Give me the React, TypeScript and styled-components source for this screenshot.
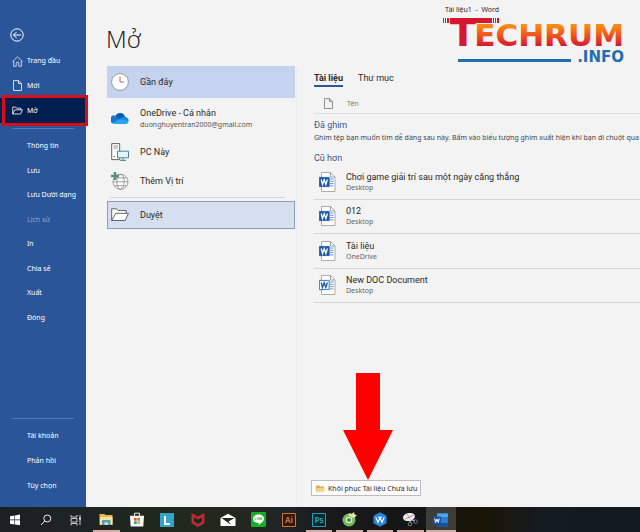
import React from "react";
import styled, { createGlobalStyle, css } from "styled-components";

const GlobalStyle = createGlobalStyle`
  *, *::before, *::after { box-sizing: border-box; }
  body {
    margin: 0;
    background: #f3f3f3;
    color: #2a2a2a;
    font-family: "Noto Sans", "Open Sans", sans-serif;
    overflow-x: hidden;
  }
  button { font: inherit; color: inherit; background: none; border: 0; padding: 0; margin: 0; text-align: left; }
  h1, h2, p { margin: 0; font-weight: 400; }
  ul { list-style: none; margin: 0; padding: 0; }
  svg { display: block; flex: none; }
`;

const labelFont = css`
  font-family: Roboto, "Noto Sans", sans-serif;
  font-size: 9px;
`;

const Page = styled.div`
  display: flex;
  flex-direction: column;
  min-height: 100vh;
`;

const Backstage = styled.div`
  flex: 1;
  display: flex;
  min-width: 0;
`;

const Sidebar = styled.nav`
  flex: none;
  width: 86px;
  display: flex;
  flex-direction: column;
  background: #2a5699;
  color: #fff;
  padding-bottom: 9px;
`;

const BackButton = styled.button`
  width: 14px;
  height: 14px;
  margin: 28px 0 7px 10px;
`;

const NavList = styled.ul<{ $rows: number; $height: number }>`
  display: grid;
  grid-template-rows: repeat(${(p) => p.$rows}, 1fr);
  min-height: ${(p) => p.$height}px;
`;

const NavItem = styled.li`
  display: grid;
`;

const NavButton = styled.button<{ $active?: boolean; $dim?: boolean }>`
  position: relative;
  display: grid;
  grid-template-columns: 11px 1fr;
  column-gap: 4px;
  align-items: center;
  padding-left: 12px;
  font-size: 7px;
  line-height: 10px;
  white-space: nowrap;
  color: ${(p) => (p.$dim ? "#8ba5cc" : "#fff")};
  background: ${(p) => (p.$active ? "#001e50" : "none")};
  ${(p) =>
    p.$active &&
    css`
      &::after {
        content: "";
        position: absolute;
        inset: -3px -2px -3px 2px;
        border: 3px solid #d90d16;
        z-index: 1;
      }
    `}
  span { grid-column: 2; }
`;

const NavRule = styled.hr<{ $push?: boolean }>`
  width: 62px;
  height: 1px;
  border: 0;
  background: #4f7bbd;
  margin: ${(p) => (p.$push ? "auto" : "5px")} 0 5px 12px;
`;

const Content = styled.main`
  flex: 1;
  min-width: 0;
  display: flex;
  flex-direction: column;
  position: relative;
`;

const WindowTitle = styled.div`
  position: absolute;
  top: 4px;
  left: 359px;
  font-size: 7px;
  line-height: 12px;
  white-space: pre;
`;

const Brand = styled.svg`
  position: absolute;
  top: 16px;
  right: 12px;
`;

const Heading = styled.h1`
  margin: 22px 0 10px 20px;
  font-family: "Open Sans", "Noto Sans", sans-serif;
  font-size: 24px;
  line-height: 34px;
  font-weight: 300;
  color: #111;
`;

const Columns = styled.div`
  flex: 1;
  display: flex;
  min-width: 0;
`;

const Places = styled.section`
  flex: none;
  width: 211px;
  padding: 0 1px 0 21px;
  border-right: 1px solid #ececec;
`;

const Place = styled.button<{ $height: number; $tone?: "selected" | "framed" }>`
  display: flex;
  align-items: center;
  gap: 11px;
  width: 100%;
  min-height: ${(p) => p.$height}px;
  padding-left: 4px;
  ${labelFont}
  line-height: 12px;
  ${(p) => p.$tone === "selected" && "background: #c5d3ee;"}
  ${(p) => p.$tone === "framed" && "background: #d5dff0; box-shadow: inset 0 0 0 1px #8b9db9;"}
  small { display: block; font-family: "Noto Sans", sans-serif; font-size: 7px; line-height: 11px; color: #555; }
`;

const PlaceRule = styled.hr`
  height: 1px;
  border: 0;
  background: #d3d3d3;
  margin: 1px 10px 3px 3px;
`;

const Documents = styled.section`
  flex: 1;
  min-width: 0;
  display: flex;
  flex-direction: column;
  padding-left: 17px;
  overflow: hidden;
`;

const Tabs = styled.div`
  display: flex;
  gap: 15px;
  margin-top: 4px;
`;

const Tab = styled.button<{ $active?: boolean }>`
  height: 17px;
  ${labelFont}
  line-height: 14px;
  font-weight: ${(p) => (p.$active ? 700 : 400)};
  border-bottom: 2px solid ${(p) => (p.$active ? "#2b5797" : "transparent")};
`;

const ListHeader = styled.div`
  display: flex;
  align-items: center;
  gap: 13px;
  height: 27px;
  padding: 7px 0 0 9px;
  border-bottom: 1px solid #dedede;
  font-size: 7px;
  color: #777;
`;

const GroupTitle = styled.h2<{ $gap: number }>`
  margin-top: ${(p) => p.$gap}px;
  ${labelFont}
  line-height: 13px;
  color: #3c5688;
`;

const Hint = styled.p`
  font-size: 7px;
  line-height: 12px;
  color: #444;
  white-space: nowrap;
`;

const Files = styled.ul`
  display: grid;
  grid-template-rows: repeat(4, 1fr);
  min-height: 138px;
`;

const FileRow = styled.li`
  display: grid;
  border-bottom: 1px solid #d6d6d6;
`;

const FileButton = styled.button`
  display: flex;
  align-items: center;
  gap: 10px;
  padding-left: 5px;
  ${labelFont}
  line-height: 12px;
  white-space: nowrap;
  small { display: block; font-family: "Noto Sans", sans-serif; font-size: 7px; line-height: 10px; color: #666; }
`;

const Footer = styled.div`
  position: relative;
  align-self: flex-start;
  margin: auto 0 11px -3px;
`;

const Pointer = styled.svg`
  position: absolute;
  bottom: 100%;
  left: 32px;
`;

const RecoverButton = styled.button`
  display: flex;
  align-items: center;
  gap: 3px;
  height: 16px;
  padding: 0 3px;
  border: 1px solid #bdbdbd;
  background: #fcfcfc;
  font-size: 7px;
  white-space: nowrap;
`;

const Taskbar = styled.footer`
  flex: none;
  height: 25px;
  background: linear-gradient(90deg, #1d2023 0%, #1e2423 14%, #20281d 24%, #23281f 36%, #202526 44%, #17191b 52%, #141614 67%, #191504 75%, #151b23 85%, #101820 100%);
`;

const TaskList = styled.div`
  display: grid;
  grid-template-columns: repeat(15, 1fr);
  width: 456px;
  max-width: 100%;
  height: 100%;
`;

const Task = styled.button<{ $running?: boolean; $focused?: boolean }>`
  display: flex;
  align-items: center;
  justify-content: center;
  margin: 0 ${(p) => (p.$focused ? 0 : 2)}px;
  padding-top: 2px;
  border-bottom: 2px solid ${(p) => (p.$running ? "#d8aaa2" : "transparent")};
  background: ${(p) => (p.$focused ? "#3c3d38" : "none")};
`;

const line = { fill: "none", stroke: "currentColor", strokeWidth: 1 } as const;

const BackIcon = () => (
  <svg width="14" height="14" viewBox="0 0 14 14" {...line}>
    <circle cx="7" cy="7" r="6.2" />
    <path d="M11 7H3.5M6.5 4 3.5 7l3 3" />
  </svg>
);

const HomeIcon = () => (
  <svg width="11" height="11" viewBox="0 0 11 11" {...line} strokeWidth=".7">
    <path d="M.5 5.7 5.5.8l5 4.9M1.6 4.8v5.5h2.6V6.4h2.6v3.9h2.6V4.8" />
  </svg>
);

const PageIcon = ({ size = 11 }: { size?: number }) => (
  <svg width={size} height={size} viewBox="0 0 11 11" {...line} strokeWidth=".8">
    <path d="M1.5.6h5l3 3v6.900h-8zM6.500.6v3h3" />
  </svg>
);

const FolderIcon = () => (
  <svg width="11" height="11" viewBox="0 0 11 11" {...line} strokeWidth=".8">
    <path d="M.7 9V2h3l1 1.2h4v1.6M.7 9l2-4.2h7.8L8.6 9z" />
  </svg>
);

const ClockIcon = () => (
  <svg width="18" height="18" viewBox="0 0 18 18">
    <circle cx="9" cy="9" r="8.4" fill="#fff" stroke="#7e8795" strokeWidth=".8" />
    <path d="M9 3.5V9h4" fill="none" stroke="#9a7467" />
  </svg>
);

const CloudIcon = () => (
  <svg width="18" height="18" viewBox="0 0 18 18">
    <path d="M4.500 7.300A5 5 0 0 1 14 7.800L12 12 4 11z" fill="#0a5ab4" />
    <path d="M1.300 14.200A4 4 0 0 1 5 7l8 7.500H4c-1 0-2 0-2.700-.3z" fill="#117ad0" />
    <path d="m7.500 10.300 5-2.500c3-.4 5.200 1.600 5.300 4l-5 2z" fill="#178bdc" />
    <path d="m2 14 6-3.800 9.600 2c-.3 1.700-1.400 2.900-3.200 2.900H4.500c-1 0-1.900-.4-2.500-1.100z" fill="#29a6ed" />
  </svg>
);

const ComputerIcon = () => (
  <svg width="18" height="18" viewBox="0 0 18 18" fill="none">
    <path d="M.7.600h8v16h-8z" fill="#fff" stroke="#666" />
    <path d="M2.500 3h4.400M2.500 5h4.400" stroke="#777" strokeWidth=".8" />
    <path d="M2.400 13.500h1.500" stroke="#666" />
    <path d="M6.500 8.200h11v6.600h-11z" fill="#e2f4fa" stroke="#4f8299" />
    <path d="M12 15v2M9 17.400h6" stroke="#4f8299" />
  </svg>
);

const GlobeIcon = () => (
  <svg width="18" height="18" viewBox="0 0 18 18" fill="none">
    <circle cx="9.500" cy="9.800" r="7.500" fill="#fff" stroke="#858585" strokeWidth=".8" />
    <ellipse cx="9.500" cy="9.800" rx="3.700" ry="7.500" stroke="#858585" strokeWidth=".8" />
    <path d="M2 9.800h15M3.400 5.900h12.200M3.400 13.700h12.200" stroke="#858585" strokeWidth=".8" />
    <path d="M4 0v8M0 4h8" stroke="#5b8d80" strokeWidth="2.400" />
  </svg>
);

const BrowseIcon = () => (
  <svg width="18" height="18" viewBox="0 0 18 18">
    <path d="M.7 14.500V2.800h5l1.500 1.700h8v2.800M.7 14.500 4.700 7.300h12.800l-3.400 7.200z" fill="#fff" stroke="#555" strokeWidth=".9" />
  </svg>
);

const WordFileIcon = ({ old }: { old?: boolean }) => (
  <svg width="17" height="20" viewBox="0 0 17 20">
    <path d="M2.500.5h9l4.500 4.500v14.500H2.500z" fill="#fff" stroke="#999" strokeWidth=".8" />
    <path d="M11.500.5V5H16" fill="none" stroke="#888" strokeWidth=".8" />
    <path d="M11 7h3.500M11 9.300h3.500M11 11.600h3.500M11 13.900h3.500" stroke="#6a97ce" />
    <path d="M.4 5.400h9.800v9.200H.4z" fill={old ? "#f5f9ff" : "#1d57a6"} stroke="#1d57a6" strokeWidth=".8" />
    <path d="m2.200 7.500 1.300 5 1.700-4.800 1.700 4.800 1.500-5" fill="none" stroke={old ? "#1d57a6" : "#fff"} strokeWidth="1.300" />
  </svg>
);

const SmallFolderIcon = () => (
  <svg width="10" height="9" viewBox="0 0 10 9">
    <path d="M1 1.500h3l1 1h4V8H1z" fill="#d7ae5b" />
    <path d="M2 4h8L8.600 8H.500z" fill="#f4d68f" />
  </svg>
);

const BrandLogo = () => (
  <Brand width="186" height="52" viewBox="0 0 186 52" role="img" aria-label="TECHRUM.INFO">
    <defs>
      <linearGradient id="flame" x1="0" y1="0" x2="0" y2="1">
        <stop offset=".25" stopColor="#f98a12" />
        <stop offset=".55" stopColor="#ee4a20" />
        <stop offset=".8" stopColor="#d5182f" />
      </linearGradient>
    </defs>
    <path d="M8 2h42v5H8zM1 2h1v5H1zM3 2h1v5H3zM5 2h2v5H5zM51 2h1v5h-1zM53 2h1v5h-1zM55 2h2v5h-2z" fill="#d5182f" />
    <g fontFamily="DejaVu Sans" fontWeight="700">
      <text x="21" y="30" textAnchor="middle" fontSize="38" fill="#d5182f">T</text>
      <text x="182" y="30" textAnchor="end" fontSize="31" fill="url(#flame)">ECHRUM</text>
      <text x="182" y="46" textAnchor="end" fontSize="15" fill="#236eb0">.INFO</text>
    </g>
    <path d="M16 43h113v3H16z" fill="#236eb0" />
  </Brand>
);

const WindowsIcon = () => (
  <svg width="12" height="12" viewBox="0 0 12 12" fill="#fff">
    <path d="m1 2.200 4.400-.7v4.100H1zM6 1.400l5-.8v5H6zM1 6.200h4.400v4.200L1 9.800zM6 6.200h5v5l-5-.7z" />
  </svg>
);

const SearchIcon = () => (
  <svg width="12" height="12" viewBox="0 0 12 12" fill="none" stroke="#eee">
    <circle cx="7.300" cy="4.500" r="3.500" />
    <path d="M4.800 7 1 11" />
  </svg>
);

const TaskViewIcon = () => (
  <svg width="12" height="12" viewBox="0 0 12 12" fill="none" stroke="#ddd" strokeWidth=".9">
    <path d="M1 1v2h6V1M1 4.500h6v3.500H1zM1 11.500v-2h6v2M10 1v10" />
    <path d="M9 3.500h2v2H9z" fill="#ddd" stroke="none" />
  </svg>
);

const ExplorerIcon = () => (
  <svg width="14" height="13" viewBox="0 0 14 13">
    <path d="M.5 1h5l1 1h7v10H.5z" fill="#e6b94e" />
    <path d="M1 4h12.500v7.500H1z" fill="#fbe39b" />
    <path d="M3 12V7h8.500v5H9V9.500H5.500V12z" fill="#4d9fc6" />
  </svg>
);

const StoreIcon = () => (
  <svg width="14" height="15" viewBox="0 0 14 15">
    <path d="M4.500 4V1.200h5V4" fill="none" stroke="#eee" />
    <path d="M0 3.800h14l-.7 10.700H.7z" fill="#f7f7f7" />
    <path d="M4 6h2.700v2.700H4z" fill="#e85628" />
    <path d="M7.300 6H10v2.700H7.300z" fill="#78a62e" />
    <path d="M4 9.300h2.700V12H4z" fill="#3092c9" />
    <path d="M7.300 9.300H10V12H7.300z" fill="#e9ad2a" />
  </svg>
);

const LenovoIcon = () => (
  <svg width="14" height="14" viewBox="0 0 14 14">
    <path d="M0 0h14v14H0z" fill="#35a2c7" />
    <path d="M5 3v8h4.800" fill="none" stroke="#fff" strokeWidth="2" />
  </svg>
);

const ShieldIcon = () => (
  <svg width="14" height="14" viewBox="0 0 14 14">
    <path d="M1.800 2.200 7 5l5.200-2.800v7.300L7 12.500 1.800 9.500z" fill="none" stroke="#b92b38" strokeWidth="2.600" />
  </svg>
);

const MailIcon = () => (
  <svg width="16" height="14" viewBox="0 0 16 14">
    <path d="M.5 5 8 .8 15.500 5v8H.5z" fill="#fff" />
    <path d="M1.500 5h13L8.500 8.500l3 3.500L7 9z" fill="#22271f" />
  </svg>
);

const LineIcon = () => (
  <svg width="15" height="15" viewBox="0 0 15 15">
    <rect width="15" height="15" rx="1" fill="#18ac28" />
    <path d="M7.500 2.500c3.200 0 5.500 1.800 5.500 4.300 0 2-2 3.700-5.300 6.200v-2C4.200 11 2 9.300 2 6.800c0-2.500 2.400-4.300 5.500-4.300z" fill="#fff" />
    <path d="M4 5.500v2.200h1.200M6.200 5.500v2.200M7.200 7.700V5.500l1.400 2.200V5.500M11 5.500H9.700v2.200H11M9.700 6.600H11" fill="none" stroke="#18ac28" strokeWidth=".6" />
  </svg>
);

const AdobeIcon = ({ name, tint, ground }: { name: string; tint: string; ground: string }) => (
  <svg width="14" height="14" viewBox="0 0 14 14">
    <path d="M.5.5h13v13H.5z" fill={ground} stroke={tint} />
    <text x="7" y="10" textAnchor="middle" fontFamily="Open Sans" fontWeight="700" fontSize="8" fill={tint}>{name}</text>
  </svg>
);

const BrowserIcon = () => (
  <svg width="15" height="15" viewBox="0 0 15 15">
    <circle cx="7" cy="8" r="6.500" fill="#72b95b" />
    <circle cx="7" cy="8" r="3.300" fill="#e9f2d8" />
    <circle cx="7" cy="8" r="2.100" fill="#3c9248" />
    <path d="m6 3 2-2 1.500 1L12 0l.5 2.500L15 3l-3 3z" fill="#eee0b8" />
  </svg>
);

const WpsIcon = () => (
  <svg width="14" height="15" viewBox="0 0 14 15">
    <path d="m7 .3 6.500 3.500v7.400L7 14.700.5 11.200V3.800z" fill="#2784da" />
    <path d="m2.800 5.300 2.200 5 2-4.500 2 4.500 2.200-5M5 5.300h4" fill="none" stroke="#fff" strokeWidth="1.100" />
  </svg>
);

const SnipIcon = () => (
  <svg width="15" height="15" viewBox="0 0 15 15">
    <ellipse cx="6" cy="5" rx="6" ry="4" fill="#eee" transform="rotate(-12 6 5)" />
    <path d="M2 7 11 3M4 2l4 6" stroke="#bd6764" strokeWidth=".7" />
    <path d="m6 7 6 2M8 5l-1 6" stroke="#ddd" />
    <circle cx="7" cy="12" r="1.800" fill="none" stroke="#667d91" />
    <circle cx="12.500" cy="9.500" r="1.800" fill="none" stroke="#667d91" />
  </svg>
);

const WordIcon = () => (
  <svg width="15" height="14" viewBox="0 0 15 14">
    <rect x="4" y=".5" width="11" height="13" rx="1" fill="#2b7cd3" />
    <path d="M4 1.500a1 1 0 0 1 1-1h9a1 1 0 0 1 1 1V4H4z" fill="#48a8ec" />
    <path d="M4 10h11v2.500a1 1 0 0 1-1 1H5a1 1 0 0 1-1-1z" fill="#174e9e" />
    <rect y="3.500" width="8" height="8" rx=".7" fill="#1553ad" />
    <path d="m1.700 5.500 1 4L4 6l1.300 3.500 1-4" fill="none" stroke="#fff" />
  </svg>
);

const primaryNav = [
  { label: "Trang đầu", icon: <HomeIcon /> },
  { label: "Mới", icon: <PageIcon /> },
  { label: "Mở", icon: <FolderIcon />, active: true },
];

const secondaryNav = ["Thông tin", "Lưu", "Lưu Dưới dạng", "Lịch sử", "In", "Chia sẻ", "Xuất", "Đóng"];
const accountNav = ["Tài khoản", "Phản hồi", "Tùy chọn"];

const files = [
  { name: "Chơi game giải trí sau một ngày căng thẳng", place: "Desktop" },
  { name: "012", place: "Desktop" },
  { name: "Tài liệu", place: "OneDrive" },
  { name: "New DOC Document", place: "Desktop", old: true },
];

const tasks = [
  { label: "Start", icon: <WindowsIcon /> },
  { label: "Search", icon: <SearchIcon /> },
  { label: "Task View", icon: <TaskViewIcon /> },
  { label: "File Explorer", icon: <ExplorerIcon />, running: true },
  { label: "Store", icon: <StoreIcon /> },
  { label: "Lenovo", icon: <LenovoIcon /> },
  { label: "McAfee", icon: <ShieldIcon /> },
  { label: "Mail", icon: <MailIcon /> },
  { label: "LINE", icon: <LineIcon /> },
  { label: "Illustrator", icon: <AdobeIcon name="Ai" tint="#c77a3c" ground="#35150c" /> },
  { label: "Photoshop", icon: <AdobeIcon name="Ps" tint="#20a0b8" ground="#0b2830" />, running: true },
  { label: "Cốc Cốc", icon: <BrowserIcon />, running: true },
  { label: "WPS Office", icon: <WpsIcon />, running: true },
  { label: "Snipping Tool", icon: <SnipIcon />, running: true },
  { label: "Word", icon: <WordIcon />, running: true, focused: true },
];

export default function App() {
  return (
    <Page>
      <GlobalStyle />
      <Backstage>
        <Sidebar>
          <BackButton aria-label="Quay lại"><BackIcon /></BackButton>
          <NavList $rows={3} $height={74}>
            {primaryNav.map((item) => (
              <NavItem key={item.label}>
                <NavButton $active={item.active}>{item.icon}<span>{item.label}</span></NavButton>
              </NavItem>
            ))}
          </NavList>
          <NavRule />
          <NavList $rows={8} $height={196}>
            {secondaryNav.map((label) => (
              <NavItem key={label}>
                <NavButton $dim={label === "Lịch sử"} disabled={label === "Lịch sử"}><span>{label}</span></NavButton>
              </NavItem>
            ))}
          </NavList>
          <NavRule $push />
          <NavList $rows={3} $height={74}>
            {accountNav.map((label) => (
              <NavItem key={label}><NavButton><span>{label}</span></NavButton></NavItem>
            ))}
          </NavList>
        </Sidebar>
        <Content>
          <WindowTitle>Tài liệu1  -  Word</WindowTitle>
          <BrandLogo />
          <Heading>Mở</Heading>
          <Columns>
            <Places>
              <Place $height={32} $tone="selected"><ClockIcon />Gần đây</Place>
              <Place $height={40}>
                <CloudIcon />
                <span>OneDrive - Cá nhân<small>duonghuyentran2000@gmail.com</small></span>
              </Place>
              <Place $height={28}><ComputerIcon />PC Này</Place>
              <Place $height={30}><GlobeIcon />Thêm Vị trí</Place>
              <PlaceRule />
              <Place $height={28} $tone="framed"><BrowseIcon />Duyệt</Place>
            </Places>
            <Documents>
              <Tabs role="tablist">
                <Tab role="tab" aria-selected $active>Tài liệu</Tab>
                <Tab role="tab" aria-selected={false}>Thư mục</Tab>
              </Tabs>
              <ListHeader><PageIcon />Tên</ListHeader>
              <GroupTitle $gap={5}>Đã ghim</GroupTitle>
              <Hint>Ghim tệp bạn muốn tìm dễ dàng sau này. Bấm vào biểu tượng ghim xuất hiện khi bạn di chuột qua một tệp.</Hint>
              <GroupTitle $gap={8}>Cũ hơn</GroupTitle>
              <Files>
                {files.map((file) => (
                  <FileRow key={file.name}>
                    <FileButton>
                      <WordFileIcon old={file.old} />
                      <span>{file.name}<small>{file.place}</small></span>
                    </FileButton>
                  </FileRow>
                ))}
              </Files>
              <Footer>
                <Pointer width="50" height="107" viewBox="0 0 50 107" aria-hidden="true">
                  <path d="M13 0h24v57h13L25 107 0 57h13z" fill="#fe0000" />
                </Pointer>
                <RecoverButton><SmallFolderIcon />Khôi phục Tài liệu Chưa lưu</RecoverButton>
              </Footer>
            </Documents>
          </Columns>
        </Content>
      </Backstage>
      <Taskbar>
        <TaskList>
          {tasks.map((task) => (
            <Task key={task.label} aria-label={task.label} $running={task.running} $focused={task.focused}>{task.icon}</Task>
          ))}
        </TaskList>
      </Taskbar>
    </Page>
  );
}
